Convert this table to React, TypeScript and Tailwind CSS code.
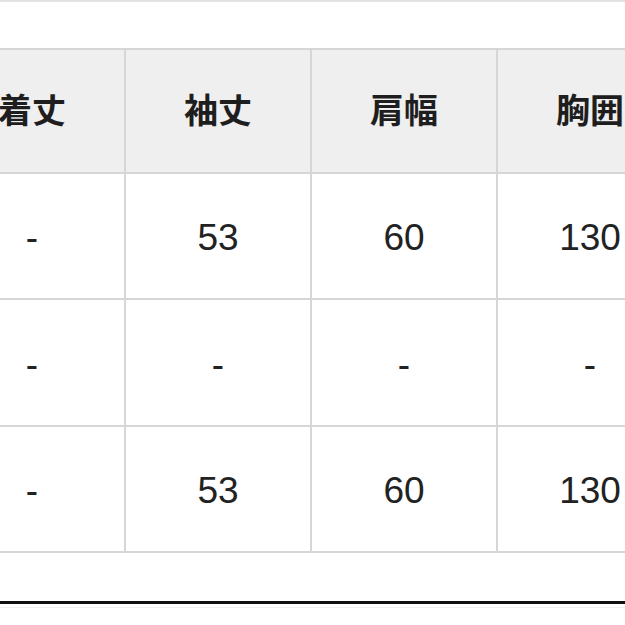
const headers = ["着丈", "袖丈", "肩幅", "胸囲"];
const rows = [
  ["-", "53", "60", "130"],
  ["-", "-", "-", "-"],
  ["-", "53", "60", "130"],
];

export default function App() {
  return (
    <div className="h-[625px] w-[625px] overflow-hidden bg-white">
      <div className="h-[2px] bg-[#e2e2e2]" />
      <div className="mt-[46px] ml-[-60px] grid w-[744px] grid-cols-[184px_184px_184px_184px] gap-[2px] border-y-2 border-[#d6d6d6] bg-[#d6d6d6] font-['Liberation_Sans','Noto_Sans_CJK_JP',sans-serif]">
        {headers.map((h) => (
          <div
            key={h}
            className="flex h-[122px] items-center justify-center bg-[#efefef] text-[34px] font-bold text-[#1e1e1e]"
          >
            {h}
          </div>
        ))}
        {rows.map((row, i) =>
          row.map((v, j) => (
            <div
              key={`${i}-${j}`}
              className={`flex items-center justify-center bg-white pt-[4px] text-[37px] text-[#222] ${
                i === 1 ? "h-[125px]" : "h-[124px]"
              }`}
            >
              {v}
            </div>
          ))
        )}
      </div>
      <div className="mt-[48px] h-[3px] bg-[#111]" />
      <div className="mt-[3px] h-[1px] bg-[#f0f0f0]" />
    </div>
  );
}
